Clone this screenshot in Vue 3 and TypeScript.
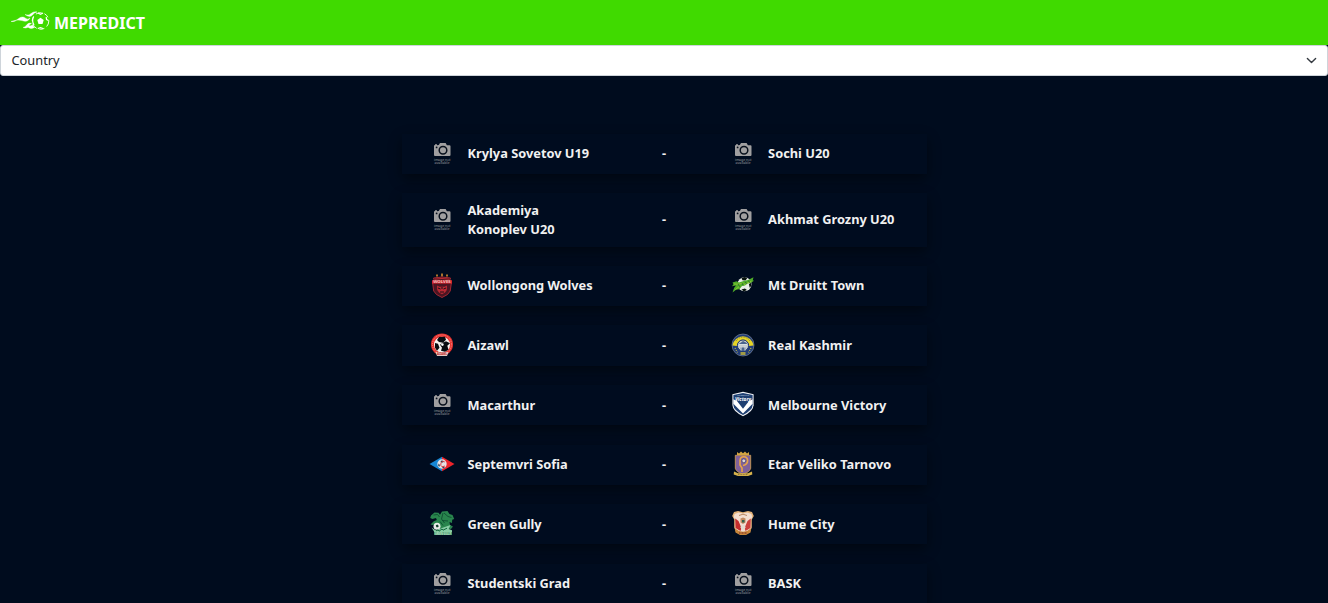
<script setup lang="ts">
interface Team {
  name: string
  crest: string
}

interface Match {
  home: Team
  away: Team
}

const team = (name: string, crest = 'none'): Team => ({ name, crest })

const matches: Match[] = [
  { home: team('Krylya Sovetov U19'), away: team('Sochi U20') },
  { home: team('Akademiya Konoplev U20'), away: team('Akhmat Grozny U20') },
  { home: team('Wollongong Wolves', 'wolves'), away: team('Mt Druitt Town', 'druitt') },
  { home: team('Aizawl', 'aizawl'), away: team('Real Kashmir', 'kashmir') },
  { home: team('Macarthur'), away: team('Melbourne Victory', 'victory') },
  { home: team('Septemvri Sofia', 'septemvri'), away: team('Etar Veliko Tarnovo', 'etar') },
  { home: team('Green Gully', 'gully'), away: team('Hume City', 'hume') },
  { home: team('Studentski Grad'), away: team('BASK') },
]
</script>

<template>
  <div class="page">
    <svg class="symbols" aria-hidden="true">
      <symbol id="none" viewBox="0 0 26 26">
        <path d="M5 5.3h1v-1h2v1l1.8-.2L11 3h5.6l1.3 2.3h2.6q1 0 1 1V15q0 1-1 1H6q-1 0-1-1Z" fill="#a09fa0" />
        <circle cx="14" cy="10.2" r="3.8" fill="#a09fa0" stroke="#08101c" stroke-width="1.5" />
        <circle cx="7.6" cy="7.4" r=".9" fill="#08101c" />
        <text x="5" y="20.7" class="tiny" textLength="16.5" lengthAdjust="spacingAndGlyphs">image not</text>
        <text x="5.5" y="24.2" class="tiny" textLength="15" lengthAdjust="spacingAndGlyphs">available</text>
      </symbol>
      <symbol id="wolves" viewBox="0 0 26 26">
        <path d="M7 2.5h2v2H7zM12 1.5h2v3h-2zM17 2.5h2v2h-2z" fill="#aa742d" />
        <path d="M4.5 6Q13 4 21.5 6l-1 3 2 1-1.3 9-2.7 3.5-5.5 3-5.5-3-2.8-3.5L3.5 10l2-1Z" fill="#4b1522" stroke="#b42933" stroke-width=".9" />
        <path d="M6 7.2q7-1.5 14 0" fill="none" stroke="#b92932" stroke-width="1" />
        <path d="M3 8.2h20v3.4H3z" fill="#d8262e" />
        <text x="4.2" y="11" class="mark" textLength="17.6" lengthAdjust="spacingAndGlyphs" fill="#e8c4c0">WOLVES</text>
        <path d="m8 13.5 2.500 1.200h5l2.500-1.200-.2 4.500-1.800 2.500-3 1.800-3-1.800L8.200 18Z" fill="#b92933" />
        <path d="m9 16 2.5 1m5.5-1-2.5 1m-3.5 3h4m-2-5v2" stroke="#1a1018" fill="none" />
      </symbol>
      <symbol id="druitt" viewBox="0 0 26 26">
        <circle cx="14.5" cy="12.2" r="7" fill="#e9eee8" />
        <path d="m11.5 6.2 3-1.1 2.8 1-1.8 2.4-3-.3Zm7.4 5.8 2.3-1.2.1 3-1.6 2Zm-7.4 5.5 3.4-1 2 1.6-3 1.3Z" fill="#07120c" />
        <path d="m2.5 10.5 4-1.3L9 10.600l5.500-1.800 3.500-.8 5.500-2.700-.8 2.900 1.300.6-3 2-3.800 1-2.200 1.600-3 .6-2.600 3.200-3.400.6-3.500 2.700 1.700-4.700L6 13.500l-4 .8 1.400-2Z" fill="#4fae29" />
        <path d="m4 12 4.5.2 5-1.2m-8 6.500 4.500-3.600m4-1.300 7.500-3.500" fill="none" stroke="#a0c936" stroke-width=".8" />
        <path d="m8 12 2 3m2-4 1.200 2.400m2.200-3.500 1.200 2.200m2-3.500 1 2" stroke="#15552e" stroke-width=".7" />
      </symbol>
      <symbol id="aizawl" viewBox="0 0 26 26">
        <circle cx="13" cy="12.4" r="11" fill="#e93330" />
        <circle cx="13" cy="12.4" r="9.5" fill="none" stroke="#ef8f88" stroke-dasharray="1 1" stroke-width="1" />
        <circle cx="13" cy="12.7" r="8" fill="#f4f2ef" />
        <path d="m10 5 6-.2 1 3-3 3-4-.8-2-2Zm-4 6 3 .8 1.5 4-2.5 3-2-3Zm7 .3 4-2 4 2-2.7 2.4 1.2 4-3.5 2-4-1 1-3-2-3Z" fill="#070b10" />
        <circle cx="13.4" cy="12.6" r="1.3" fill="white" />
        <path d="M6.5 20h13L18 24H8Z" fill="#e6c8c2" />
        <text x="8" y="23.2" class="mark" textLength="10" lengthAdjust="spacingAndGlyphs" fill="#bb2024">AIZAWL</text>
      </symbol>
      <symbol id="kashmir" viewBox="0 0 26 26">
        <circle cx="13" cy="13" r="11" fill="#213c78" stroke="#8c959f" stroke-width=".6" />
        <path d="M2.4 13.5A10.7 10.7 0 0 1 23.6 13.5L19 14a6 6 0 0 0-12 0Z" fill="#e6d426" />
        <path d="M6 9a8.2 8.2 0 0 1 14 0" fill="none" stroke="#6f703a" stroke-width="1" stroke-dasharray="1 1.2" />
        <circle cx="13" cy="13.5" r="5.6" fill="#c5ccd0" stroke="#1c356e" />
        <path d="m8.5 12 2.500-1.4 2-1.6 3 1.6 1.500 1.4-2 1H10Zm1.500 3.5h6l-1 3.5h-4Z" fill="#4a648c" />
        <path d="M9 12.5h8m-6 2v4m4-4v4" stroke="#e5eceb" stroke-width=".9" />
        <path d="m5 16 2.4 4.5M21 16l-2.4 4.5" stroke="#d9ce3a" stroke-width="1.1" stroke-dasharray="1 1.2" />
        <path d="M10.5 20h5v3h-5z" fill="#a19b45" />
      </symbol>
      <symbol id="victory" viewBox="0 0 26 26">
        <path d="M2.4 3.2 13 .8l10.6 2.4v11q-.2 6-10.6 11Q2.5 20 2.4 14Z" fill="#f3f5f8" />
        <path d="M3.4 4 13 2l9.6 2v10q0 5-9.6 10Q3.5 19 3.4 14Z" fill="#1e3f72" />
        <path d="M3.4 8.2 7 10l6 7.8 6-7.8 3.6-1.8v4.6L13 22.6 3.4 12.8Z" fill="white" />
        <text x="7" y="5.4" class="tiny pale" textLength="12" lengthAdjust="spacingAndGlyphs">MELBOURNE</text>
        <text x="5" y="9.6" class="victory" textLength="16" lengthAdjust="spacingAndGlyphs">Victory</text>
      </symbol>
      <symbol id="septemvri" viewBox="0 0 26 26">
        <path d="M.5 13 13 5.8V20.3Z" fill="#1686d4" />
        <path d="M13 5.8 25.5 13 13 20.3Z" fill="#ed242b" />
        <circle cx="13" cy="13" r="4.7" fill="#e5e2e4" />
        <path d="m11.5 10 1.5-.6 1.5.6-.4 1.5h-2Zm-2 2.6 1.5 1.5-.5 1.6-1.4-1Zm3.5 4 1.6-1 1.3.8-1.5 1Z" fill="#304759" />
        <path d="M15.8 11q-3.5-1.8-4 2t4.2 2" fill="none" stroke="#d73539" stroke-width=".9" />
      </symbol>
      <symbol id="etar" viewBox="0 0 26 26">
        <path d="m7 1 2 1.4L11 .5l2 1.7L15 .5l2 1.9L19 1v3H7Z" fill="#d3a541" />
        <path d="M5.3 4.3h15.4v13q-1 4-7.7 5.8-6.6-1.8-7.7-5.8Z" fill="#80619b" stroke="#d8a54e" stroke-width=".8" />
        <path d="M12 21v-4l-2-3V9.800q0-4 3.800-4t3.800 4q0 3.600-4.600 4.800" fill="none" stroke="#e9a648" stroke-width="1.6" />
        <circle cx="13.8" cy="9.8" r="1.9" fill="#ddd7dd" stroke="#373357" stroke-width=".6" />
        <path d="m4 20.4 4 1.8h10l4-1.8.3 3L18 25H8l-4.3-1.6Z" fill="#d6b24b" />
        <path d="M8 23.6h10" stroke="#8e733b" stroke-dasharray="1 .6" />
      </symbol>
      <symbol id="gully" viewBox="0 0 26 26">
        <path d="m2 5.5 3.5-3 4 .2 1.5 2 2-3.2 5.5-.5 2 3 3 1 1.7 4-2 .7-.2 3.3-2.5-1 .5 3 3 1.5-2 2.5-5-.5-5 .5-3-2.5-2-2.8L4 15l-2.5-.5 3.3-3.3 3-1.2-.8-2-3.5 1-2.300-1Z" fill="#29854d" />
        <path d="m4.5 5 4-.5 2 2.5m3.5-4-1.5 6 3 4m-.5-10 4 3.5 3.5 1m-9.500 3 6 .5m-8 .5 3 4" stroke="#0d4f31" stroke-width=".9" fill="none" />
        <circle cx="8" cy="16.3" r="3.5" fill="#e8eee9" />
        <path d="m6.8 15.3 1.6-.8 1.4 1.4-.8 1.3H7.4Z" fill="#143c2b" />
        <path d="m2.500 17.500 4 2.700L21.5 15l-1.8 4 3.3 1.2V25H5v-3.4Z" fill="#87cda4" />
        <path d="m7 20.8 2-.8 1 1.2 3-2.2 1 1.2 4-2" fill="none" stroke="#12683c" stroke-width="1" />
        <path d="M5 22h18v3H5z" fill="#4c9a6d" />
        <text x="6" y="24.6" class="mark" textLength="16" lengthAdjust="spacingAndGlyphs" fill="#c2e6d0">GREEN GULLY</text>
      </symbol>
      <symbol id="hume" viewBox="0 0 26 26">
        <path d="m4 2 4-1 5 1.2L18 1l4 1 1.8 4-2 3.5v8l-2 5-6.8 2.500-6.8-2.500-2-5v-8L2.2 6Z" fill="#e3b278" />
        <path d="m4.6 4 4-1.4 4.4 1 4.4-1 4 1.4.8 3-1.400 3v7.5q-1 4-7.8 5.5Q6 21.5 5.2 17.5V10L3.8 7Z" fill="#f3ded0" />
        <path d="m5.2 8.5 3.3 2.5 3 7-1 3-5-3Z" fill="#c42d2d" />
        <path d="m20.8 8.5-3.3 2.5-3 7 1 3 5-3Z" fill="#cc403b" />
        <path d="m9 5.5 4-1.3 4 1.3" stroke="#b88762" fill="none" />
        <path d="m10.500 8.500 2.500-1 2.500 1v4l-2.500 1.500-2.500-1.500Z" fill="#c48c62" />
        <path d="M12 10h2.500v2.500H12z" fill="#32634a" />
        <circle cx="13" cy="17.2" r="2.4" fill="#e3dcd0" />
        <path d="m5 18.5 4 2.500 4 .8 4-.8 4-2.500-.5 4L16 25h-6l-4.500-2.500Z" fill="#c78539" />
        <path d="M9 23h8" stroke="#7a2928" stroke-dasharray="1 .5" />
      </symbol>
    </svg>

    <header class="bar">
      <svg class="logo" viewBox="0 0 40 22" fill="none" stroke="#fff">
        <path d="M0 11.5q4 .8 7-2.5 4-3.5 7.5-.8 2.5 2 4.5-.2-2.5 5-8 2.5-4.5-1.5-11 1Z" fill="#fff" stroke-width=".4" />
        <path d="M12 17.5q2.5-.5 4-3 2-2 4.5-1.2-2 .7-2.5 2.7 2 0 3.5-1l2 2.5q-3.5 2.2-6.5-.2-2 1.4-5 .2Z" fill="#fff" stroke-width=".4" />
        <path d="M14 4.5q4 1.5 6-1 2.5-2.3 6-1.6-3 .6-4.5 3.1-2.5 3-7.5-.5Z" fill="#fff" stroke-width=".4" />
        <path d="M22.5 7q-2 4 .5 8" stroke-width="1.2" />
        <circle cx="29.5" cy="11" r="8.3" stroke-width=".9" stroke-dasharray="6 3 5 3" />
        <path d="m29.5 7.8 3.2 2.3-1.2 3.8h-4l-1.2-3.8Z" fill="#fff" stroke="none" />
        <path d="m27 3 2.5 1.3L32 3m3.2 4.2.4 2.3 1.9 1m-10.7 8 2.7-.8 2.5.8" stroke-width="1.3" />
      </svg>
      <span class="brand">MEPREDICT</span>
    </header>

    <div class="select" role="combobox" aria-expanded="false" tabindex="0">
      <span>Country</span>
      <svg class="chevron" viewBox="0 0 16 16"><path d="m2 5 6 6 6-6" /></svg>
    </div>

    <main class="matches">
      <article v-for="match in matches" :key="match.home.name" class="match">
        <div class="side">
          <svg class="crest"><use :href="'#' + match.home.crest" /></svg>
          <span class="name">{{ match.home.name }}</span>
        </div>
        <span class="score">-</span>
        <div class="side">
          <svg class="crest"><use :href="'#' + match.away.crest" /></svg>
          <span class="name">{{ match.away.name }}</span>
        </div>
      </article>
    </main>
  </div>
</template>

<style>
body {
  margin: 0;
  background: #000c1e;
  overflow: hidden;
}
</style>

<style scoped>
.page {
  height: 603px;
  overflow: hidden;
  background: #000c1e;
  font-family: "Noto Sans", sans-serif;
}
.symbols {
  display: block;
  width: 0;
  height: 0;
  overflow: visible;
}
.symbols symbol {
  overflow: visible;
}
.bar {
  box-sizing: border-box;
  display: flex;
  align-items: center;
  height: 45px;
  padding-left: 11px;
  gap: 3px;
  background: #40da00;
}
.logo {
  width: 40px;
  height: 22px;
  margin-bottom: 3px;
}
.brand {
  color: #fff;
  font-size: 16px;
  font-weight: 700;
}
.select {
  box-sizing: border-box;
  display: flex;
  align-items: center;
  justify-content: space-between;
  height: 31px;
  padding: 0 10.5px 1px;
  border: 1px solid #ced4da;
  border-radius: 3px;
  background: #fff;
  color: #212529;
  font-size: 12.8px;
}
.chevron {
  width: 11px;
  height: 11px;
}
.chevron path {
  fill: none;
  stroke: #343a40;
  stroke-width: 2;
  stroke-linecap: round;
  stroke-linejoin: round;
}
.matches {
  display: flex;
  flex-direction: column;
  gap: 19.2px;
  width: 525px;
  margin: 57.9px auto 0;
}
.match {
  box-sizing: border-box;
  display: grid;
  grid-template-columns: 172px 128.6px 172px;
  align-items: center;
  flex: none;
  padding: 7.2px 0 7.2px 27.5px;
  background: #000c1f;
  box-shadow: 0 5px 12px rgba(0, 0, 0, 0.45);
  color: #f1f1f1;
  font-size: 12.8px;
  font-weight: 700;
  line-height: 19.2px;
}
.match:nth-child(2) {
  padding-block: 7.4px;
}
.side {
  display: flex;
  align-items: center;
  gap: 12.5px;
}
.crest {
  flex: none;
  width: 26px;
  height: 26px;
  margin: -0.8px 0 0.8px;
  overflow: visible;
}
.name {
  width: 131px;
}
.score {
  padding-left: 61px;
}
.tiny {
  fill: #96979b;
  font: 2.6px "Noto Sans", sans-serif;
}
.pale {
  fill: #bac8dc;
  font-size: 2.2px;
}
.mark {
  font: 700 3px "Noto Sans", sans-serif;
}
.victory {
  fill: #fff;
  font: italic 700 4.3px "Noto Sans", sans-serif;
}
</style>
